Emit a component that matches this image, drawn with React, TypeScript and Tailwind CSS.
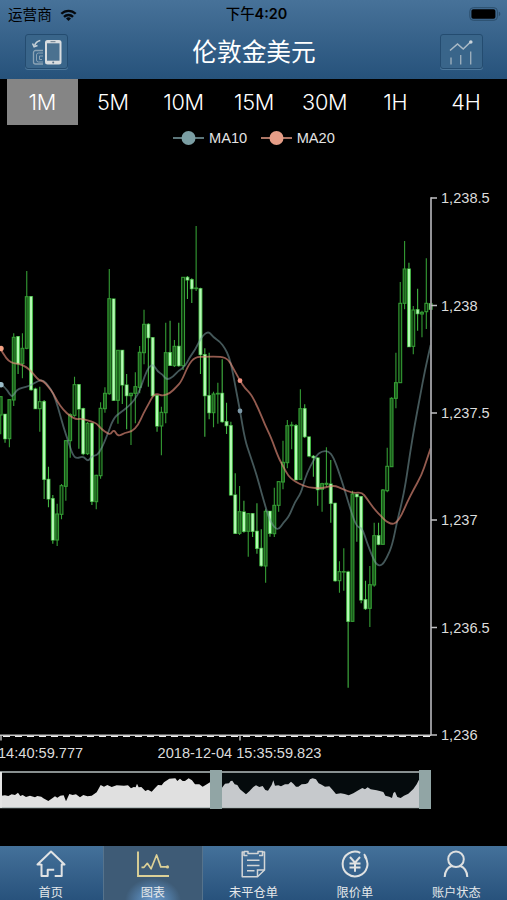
import type { ReactNode } from 'react';
import clsx from 'clsx';

const PERIODS = ['1M', '5M', '10M', '15M', '30M', '1H', '4H'];

const LEGEND = [
  { name: 'MA10', color: '#7b9ea3' },
  { name: 'MA20', color: '#e69d87' },
];

// high, body top, body bottom, low, kind: u = rising, o = rising and narrow, d = falling
// (all in thirds of a pixel, counted from CHART_TOP)
type Candle = [number, number, number, number, 'u' | 'o' | 'd'];

const CANDLES: Candle[] = [
  [528, 530, 585, 643, 'u'], [583, 583, 656, 668, 'd'], [539, 539, 656, 682, 'u'],
  [340, 352, 540, 558, 'u'], [348, 350, 431, 462, 'd'], [340, 385, 431, 475, 'u'],
  [153, 230, 385, 388, 'u'], [229, 230, 509, 512, 'd'], [503, 507, 566, 566, 'd'],
  [500, 545, 566, 635, 'o'], [540, 545, 778, 837, 'd'], [740, 778, 837, 862, 'd'],
  [825, 836, 960, 971, 'd'], [851, 882, 960, 978, 'u'], [792, 797, 883, 898, 'o'],
  [660, 662, 799, 842, 'u'], [580, 584, 662, 713, 'u'], [470, 494, 586, 590, 'o'],
  [494, 494, 567, 686, 'd'], [563, 566, 701, 706, 'd'], [606, 610, 701, 705, 'u'],
  [608, 610, 844, 855, 'd'], [764, 766, 845, 868, 'u'], [547, 565, 767, 776, 'o'],
  [502, 520, 566, 578, 'u'], [147, 236, 521, 524, 'u'], [236, 237, 541, 541, 'd'],
  [390, 391, 541, 611, 'u'], [391, 391, 495, 552, 'd'], [462, 495, 527, 628, 'd'],
  [518, 520, 527, 675, 'u'], [457, 500, 520, 610, 'u'], [378, 397, 502, 520, 'u'],
  [269, 313, 398, 433, 'u'], [310, 313, 353, 500, 'd'], [352, 353, 527, 530, 'd'],
  [525, 527, 618, 635, 'd'], [560, 577, 618, 706, 'o'], [308, 398, 578, 610, 'u'],
  [302, 398, 436, 438, 'd'], [360, 379, 437, 441, 'u'], [308, 379, 437, 440, 'd'],
  [172, 172, 437, 450, 'o'], [168, 172, 180, 237, 'd'], [175, 179, 206, 249, 'd'],
  [18, 204, 206, 213, 'u'], [203, 206, 404, 462, 'd'], [385, 404, 527, 650, 'd'],
  [398, 527, 578, 598, 'd'], [515, 522, 578, 622, 'u'], [488, 520, 522, 611, 'u'],
  [418, 520, 605, 608, 'd'], [548, 605, 617, 642, 'd'], [605, 617, 825, 827, 'd'],
  [760, 825, 940, 941, 'd'], [798, 875, 940, 945, 'u'], [842, 876, 934, 938, 'd'],
  [879, 881, 934, 1010, 'u'], [880, 881, 934, 951, 'd'], [850, 934, 985, 1001, 'd'],
  [928, 985, 1037, 1040, 'd'], [868, 874, 1038, 1088, 'u'], [873, 874, 940, 950, 'd'],
  [803, 856, 941, 951, 'u'], [783, 785, 856, 875, 'o'], [662, 727, 786, 808, 'u'],
  [600, 617, 728, 745, 'u'], [605, 615, 617, 688, 'u'], [612, 617, 779, 781, 'd'],
  [508, 566, 778, 780, 'u'], [553, 566, 650, 654, 'd'], [649, 651, 708, 712, 'd'],
  [705, 709, 713, 770, 'd'], [712, 714, 809, 857, 'd'], [788, 791, 808, 875, 'u'],
  [682, 790, 793, 800, 'u'], [720, 792, 850, 908, 'd'], [848, 850, 1082, 1085, 'd'],
  [1024, 1055, 1082, 1118, 'o'], [985, 1055, 1056, 1112, 'u'], [1052, 1056, 1204, 1403, 'd'],
  [812, 822, 1204, 1205, 'u'], [821, 823, 830, 965, 'd'], [829, 830, 1140, 1150, 'd'],
  [1082, 1139, 1166, 1170, 'd'], [1038, 1094, 1165, 1221, 'u'], [908, 947, 1095, 1100, 'u'],
  [908, 947, 973, 976, 'd'], [807, 810, 973, 973, 'u'], [683, 739, 812, 817, 'o'],
  [532, 535, 740, 740, 'u'], [398, 488, 535, 565, 'u'], [186, 250, 488, 488, 'o'],
  [63, 147, 250, 268, 'u'], [128, 147, 380, 381, 'd'], [258, 270, 379, 403, 'o'],
  [206, 269, 281, 332, 'd'], [272, 277, 282, 352, 'u'], [115, 250, 275, 327, 'o'],
  [250, 251, 268, 322, 'd'],
];

const CHART_TOP = 220;
const STEP = 4.343;

const MA10 =
  '0,493 15,500 30,525 38,530 50,510 65,503 90,498 115,482 130,480 145,497 160,520 175,565 190,620 205,665 218,705 230,716 250,708 264,725 275,708 292,706 305,685 320,650 340,595 360,578 385,560 405,538 420,510 435,465 447,440 460,433 473,455 487,463 500,480 520,470 535,452 555,440 570,410 585,390 605,350 625,333 640,352 660,365 675,385 687,410 697,450 710,520 720,572 735,660 750,705 770,765 785,820 800,872 810,902 825,925 837,928 850,908 867,890 885,845 903,820 915,775 930,740 950,705 965,694 985,693 1000,710 1020,765 1040,830 1055,880 1070,920 1087,925 1100,965 1117,1010 1130,1035 1145,1037 1160,1015 1177,975 1190,910 1205,850 1217,790 1230,700 1245,610 1260,530 1275,450 1292,375';

const MA20 =
  '0,385 12,405 25,422 40,430 60,432 80,442 95,455 115,480 130,483 145,500 160,520 172,545 190,570 210,588 228,598 245,596 275,605 290,610 305,628 322,640 332,643 342,628 354,650 375,638 395,635 415,615 430,580 447,550 460,525 473,521 487,528 510,520 530,500 545,483 565,435 585,411 615,410 665,410 685,418 697,440 720,482 735,505 753,522 775,565 795,615 813,652 835,712 850,740 865,768 880,781 895,790 925,803 965,805 985,800 1005,797 1025,806 1060,820 1085,816 1100,835 1125,870 1145,890 1157,903 1175,913 1190,908 1205,885 1220,850 1240,810 1265,765 1280,720 1292,685';

// overview silhouette, thirds of a pixel, y counted from 725
const OVERVIEW =
  '4,212 15,211 25,213 35,208 45,210 54,203 61,213 68,210 78,216 90,212 105,217 112,213 124,215 130,220 145,228 158,219 165,214 172,218 181,212 191,211 198,229 208,207 218,210 228,208 240,217 250,210 262,214 275,212 290,202 302,180 312,185 322,180 335,186 350,181 372,182 384,181 393,190 401,186 407,187 411,176 416,187 424,186 436,198 444,194 455,200 466,188 474,180 485,181 492,172 508,161 526,160 532,168 540,161 548,168 555,168 566,160 576,166 585,178 598,178 608,185 618,179 630,172 648,172';

const OVERVIEW_SELECTED =
  '648,190 666,188 675,176 687,175 692,168 697,167 704,178 712,180 720,193 738,208 748,199 760,186 768,181 778,186 788,183 796,195 804,197 815,180 820,166 825,182 835,181 843,184 855,178 865,178 873,170 880,176 888,185 895,185 905,178 917,177 924,174 930,163 938,160 948,163 956,175 965,179 975,185 988,184 998,195 1008,207 1022,205 1034,207 1046,211 1060,205 1075,196 1087,189 1095,193 1103,187 1112,193 1130,196 1142,199 1150,201 1156,212 1168,215 1176,219 1180,204 1185,200 1192,216 1202,219 1212,212 1225,206 1240,192 1250,178 1258,162 1276,150';

// runs a curve through the midpoints so the averages have no corners
function smooth(points: string) {
  const list = points.split(' ').map((point) => point.split(',').map(Number));
  const segments = list.slice(1, -1).map(([x, y], index) => {
    const [nextX, nextY] = list[index + 2];
    return `Q${x} ${y} ${(x + nextX) / 2} ${(y + nextY) / 2}`;
  });
  return `M${list[0].join(' ')}${segments.join('')}L${list[list.length - 1].join(' ')}`;
}

const Y_TICKS = [
  { y: 198, label: '1,238.5' },
  { y: 305.5, label: '1,238' },
  { y: 413, label: '1,237.5' },
  { y: 520, label: '1,237' },
  { y: 627.5, label: '1,236.5' },
  { y: 735, label: '1,236' },
];

function StatusBar() {
  return (
    <div className="flex h-[27px] items-center justify-between pr-[6px] pl-[8px] text-black">
      <div className="flex w-[122px] items-center gap-[8px] pt-[2px]">
        <span className="text-[14.6px] leading-[20px]">运营商</span>
        <svg width="17" height="12" viewBox="0 0 18 13" fill="none" stroke="#05090d" strokeWidth="2.5">
          <path d="M1.2 5.2a11 11 0 0 1 15.6 0" />
          <path d="M4.1 8.5a7 7 0 0 1 9.8 0" />
          <path d="M9 13 6.3 10.3a3.9 3.9 0 0 1 5.4 0Z" fill="#05090d" stroke="none" />
        </svg>
      </div>
      <span className="pl-px text-[14.4px] font-semibold whitespace-nowrap">
        <span className="font-medium">下午</span>4:20
      </span>
      <div className="flex w-[119px] justify-end">
        <svg width="32" height="14" viewBox="0 0 32 14">
          <rect x="0.8" y="0.7" width="27.6" height="12.6" rx="3.5" fill="none" stroke="#2b4e6c" strokeWidth="1" />
          <rect x="2.4" y="2.3" width="24" height="9.4" rx="1.8" fill="#000" />
          <path d="M29.8 4.8c2 .6 2 3.8 0 4.4Z" fill="#2b4e6c" />
        </svg>
      </div>
    </div>
  );
}

function NavButton({ children }: { children: ReactNode }) {
  return (
    <button className="flex h-[35px] w-[43px] items-center justify-center rounded-[3px] border border-[#244c70] bg-[#39658a] shadow-[0_1px_0_#4c779b]">
      {children}
    </button>
  );
}

function NavBar() {
  return (
    <div className="flex h-[52px] items-start justify-between pt-[7px] pr-[24px] pl-[25px]">
      <NavButton>
        <svg className="shrink-0" width="32" height="28" viewBox="0 0 32 28" fill="none">
          <rect x="14" y="2" width="16.5" height="24.5" rx="2.5" fill="#d9dde0" />
          <rect x="16" y="5.3" width="12.5" height="17.4" fill="#4b7190" />
          <path d="M19.5 3.7h5" stroke="#697b8a" strokeWidth="1" />
          <circle cx="22.2" cy="24.5" r="1" fill="#587188" />
          <path d="M12 12.5H4.5a2 2 0 0 0-2 2V24a2 2 0 0 0 2 2H12" stroke="#8ba3b5" strokeWidth="1.3" />
          <path d="M12 15H7.5a2 2 0 0 0-2 2v5a2 2 0 0 0 2 2H12M12 18H8.5v3.5H11" stroke="#8ba3b5" strokeWidth="1" />
          <path d="M9.3 2.5C6.5 3 4.5 5 3.7 7.3M1.5 5.5l1.6 3.2 3.4-1.2" stroke="#c7d1d8" strokeWidth="1.5" />
        </svg>
      </NavButton>
      <h1 className="text-[24.7px] leading-[37px] whitespace-nowrap text-white">伦敦金美元</h1>
      <NavButton>
        <svg width="26" height="28" viewBox="0 0 26 28" fill="none" stroke="#a9b9c5">
          <path d="M2 12.5 9.5 6l5.7 5L22 4.5" strokeWidth="1.6" />
          <circle cx="22.8" cy="4" r="1.8" fill="#c9d3da" stroke="none" />
          <path d="M3 19.5v7M12.7 17v9.5M22.7 13.5v13" strokeWidth="1.4" stroke="#9aadbb" />
        </svg>
      </NavButton>
    </div>
  );
}

function PeriodTabs() {
  return (
    <div className="flex h-[46px] pl-[7px]">
      {PERIODS.map((period, index) => (
        <button
          key={period}
          className={clsx(
            'h-[46px] w-[70.6px] shrink-0 text-[21.7px] font-light tracking-[-0.3px] text-white',
            index === 0 && 'bg-[#858585]',
          )}
        >
          {period}
        </button>
      ))}
    </div>
  );
}

function Legend() {
  return (
    <div className="flex h-[26px] items-center gap-[13.5px] pl-[173px] font-['Liberation_Sans',sans-serif] text-[14.6px] text-[#e4e4e4]">
      {LEGEND.map(({ name, color }) => (
        <div key={name} className="flex items-center gap-[5px]">
          <svg width="31" height="16" viewBox="0 0 31 16">
            <path d="M0 8h31" stroke={color} strokeWidth="1.5" />
            <circle cx="15.5" cy="8" r="7" fill={color} />
          </svg>
          <span className="pt-px">{name}</span>
        </div>
      ))}
    </div>
  );
}

function Chart() {
  return (
    <svg
      className="block font-['Liberation_Sans',sans-serif] text-[14.6px]"
      width="507"
      height="695"
      viewBox="0 151 507 695"
      fill="none"
    >
      {CANDLES.map(([high, top, bottom, low, kind], index) => {
        const x = 0.7 + index * STEP;
        const y = (value: number) => CHART_TOP + value / 3;
        const height = Math.max((bottom - top) / 3, 0.4);
        return (
          <g key={index} stroke={kind === 'd' ? '#42b542' : '#349c34'} strokeWidth="1.1">
            <path d={`M${x} ${y(high)}V${y(top)}M${x} ${y(bottom)}V${y(low)}`} />
            <rect
              x={x - 1.4}
              y={y(top)}
              width="2.8"
              height={height}
              fill={kind === 'd' ? '#baffba' : kind === 'o' ? '#082608' : '#1b5a1b'}
            />
            {kind === 'd' && <path d={`M${x} ${y(top)}v${height}`} stroke="#b5fab5" strokeWidth="1.9" />}
          </g>
        );
      })}

      <g transform="translate(0 220) scale(.33333)" strokeLinejoin="round">
        <path d={smooth(MA10)} stroke="#7b9ea3" strokeOpacity=".55" strokeWidth="5.5" />
        <path d={smooth(MA20)} stroke="#e08a78" strokeOpacity=".66" strokeWidth="5.5" />
      </g>
      <circle cx="1" cy="384.7" r="2.7" fill="#9bbdca" />
      <circle cx="1" cy="348.5" r="2.7" fill="#f3a184" />
      <circle cx="240" cy="411" r="2.4" fill="#7c98a7" />
      <circle cx="240" cy="380.7" r="2.4" fill="#f09180" />

      <path d="M431 197.3v538" stroke="#9b9b9f" strokeWidth="1.9" />
      <path
        d="M431 198h6M431 305.5h6M431 413h6M431 520h6M431 627.5h6M431 735h6"
        stroke="#c0c0c2"
        strokeWidth="1.4"
      />
      {Y_TICKS.map(({ y, label }) => (
        <text key={label} x="441" y={y + 5.3} fill="#dcdcdc">
          {label}
        </text>
      ))}

      <path d="M0 735.3h431M1 735v5.5M240 735v5.5" stroke="#c4c4c4" strokeWidth="1.4" />
      <path d="M3 736.5h428" stroke="#eee" strokeWidth="1" strokeDasharray="7 5" />
      <text x="83.2" y="758" textAnchor="end" fill="#dcdcdc">
        14:40:59.777
      </text>
      <text x="239.5" y="758" textAnchor="middle" fill="#dcdcdc">
        2018-12-04 15:35:59.823
      </text>

      <g transform="translate(0 725) scale(.33333)">
        <rect x="648" y="140" width="628" height="107" fill="#050b0d" />
        <polygon points={`4,247 ${OVERVIEW} 648,247`} fill="#e0e0e0" />
        <polygon points={`648,247 ${OVERVIEW_SELECTED} 1276,247`} fill="#c6c9cc" />
        <path d="M0 141h1276M0 248h1276" stroke="#b5bebe" strokeWidth="4" />
        <path d="M3 141v107" stroke="#e5e5e5" strokeWidth="6" />
        <rect x="630" y="135" width="36" height="117" fill="#91a5a5" />
        <rect x="1257" y="135" width="36" height="117" fill="#91a5a5" />
      </g>
    </svg>
  );
}

function HomeIcon() {
  return (
    <svg width="32" height="30" viewBox="0 0 32 30" fill="none" stroke="#e1e3e4" strokeWidth="2">
      <path d="M6.5 15.5H2.5L16 2.5l13.5 13H26.7V27h-7M6.5 15V27h6.2v-6.2h6.5" strokeLinejoin="round" />
    </svg>
  );
}

function ChartIcon() {
  return (
    <svg width="34" height="30" viewBox="0 0 34 30" fill="none" stroke="#ddd197" strokeWidth="1.7">
      <path d="M2 2.5V27h31" strokeWidth="1.9" />
      <path d="M5.5 18.3H8l3.3-4 3.8 5.5L20.6 6l4.2 11.9H32" strokeLinejoin="round" />
      <circle cx="31.5" cy="17.9" r="1.6" fill="#ddd197" stroke="none" />
    </svg>
  );
}

function OrdersIcon() {
  return (
    <svg width="28" height="30" viewBox="0 0 28 30" fill="none" stroke="#d3d6d7" strokeWidth="1.5">
      <path
        d="M5 3H3.2v24.7h15.3l7-6.7V3h-1.8M5 2.5h4v2h10v-2h4.5v4H20M5 2.5v4h3.5"
        strokeLinejoin="round"
      />
      <path d="M18.5 27.5V21h6.8M8 11.3h12.5M8 16.5h12.5M8 21.7h7.5" />
    </svg>
  );
}

function PriceIcon() {
  return (
    <svg width="30" height="30" viewBox="0 0 30 30" fill="none" stroke="#e0e2e2" strokeWidth="2">
      <path d="M20.3 3.8A12.4 12.4 0 1 0 24.5 7M24 5.2a12.4 12.4 0 0 1 2.8 5.8" />
      <path d="m10 8 5 5.7L20 8M15 13.5v9.3M9.5 14.4h11M9.5 18.4h11" strokeWidth="2" />
    </svg>
  );
}

function AccountIcon() {
  return (
    <svg width="28" height="30" viewBox="0 0 28 30" fill="none" stroke="#dee0e0" strokeWidth="2">
      <circle cx="14" cy="10.3" r="7.8" />
      <path d="M2.7 28c.2-5.8 3-9.6 7.5-11.2M25.3 28c-.2-5.8-3-9.6-7.5-11.2" />
    </svg>
  );
}

const TABS = [
  { label: '首页', icon: <HomeIcon /> },
  { label: '图表', icon: <ChartIcon /> },
  { label: '未平仓单', icon: <OrdersIcon /> },
  { label: '限价单', icon: <PriceIcon /> },
  { label: '账户状态', icon: <AccountIcon /> },
];

function TabBar() {
  return (
    <nav className="grid h-[54px] grid-cols-5 bg-linear-to-b from-[#44719a] to-[#28527c]">
      {TABS.map(({ label, icon }, index) => (
        <button
          key={label}
          className={clsx(
            'flex flex-col items-center pt-[3px] text-[12.2px] leading-[16px] text-[#e5e8ea]',
            index === 1 &&
              'ml-[1.5px] border-x border-[#56738c] bg-[#3e5b76] bg-[radial-gradient(ellipse_28px_23px_at_50%_100%,#6f9dce_0%,#517ba4_55%,transparent_100%)]',
          )}
        >
          {icon}
          <span className="mt-[6px]">{label}</span>
        </button>
      ))}
    </nav>
  );
}

export default function App() {
  return (
    <div className="flex h-[900px] w-[507px] flex-col overflow-hidden bg-black font-['Inter','Noto_Sans_CJK_SC',sans-serif]">
      <header className="h-[79px] shrink-0 bg-linear-to-b from-[#477299] to-[#26527b]">
        <StatusBar />
        <NavBar />
      </header>
      <PeriodTabs />
      <Legend />
      <Chart />
      <TabBar />
    </div>
  );
}
